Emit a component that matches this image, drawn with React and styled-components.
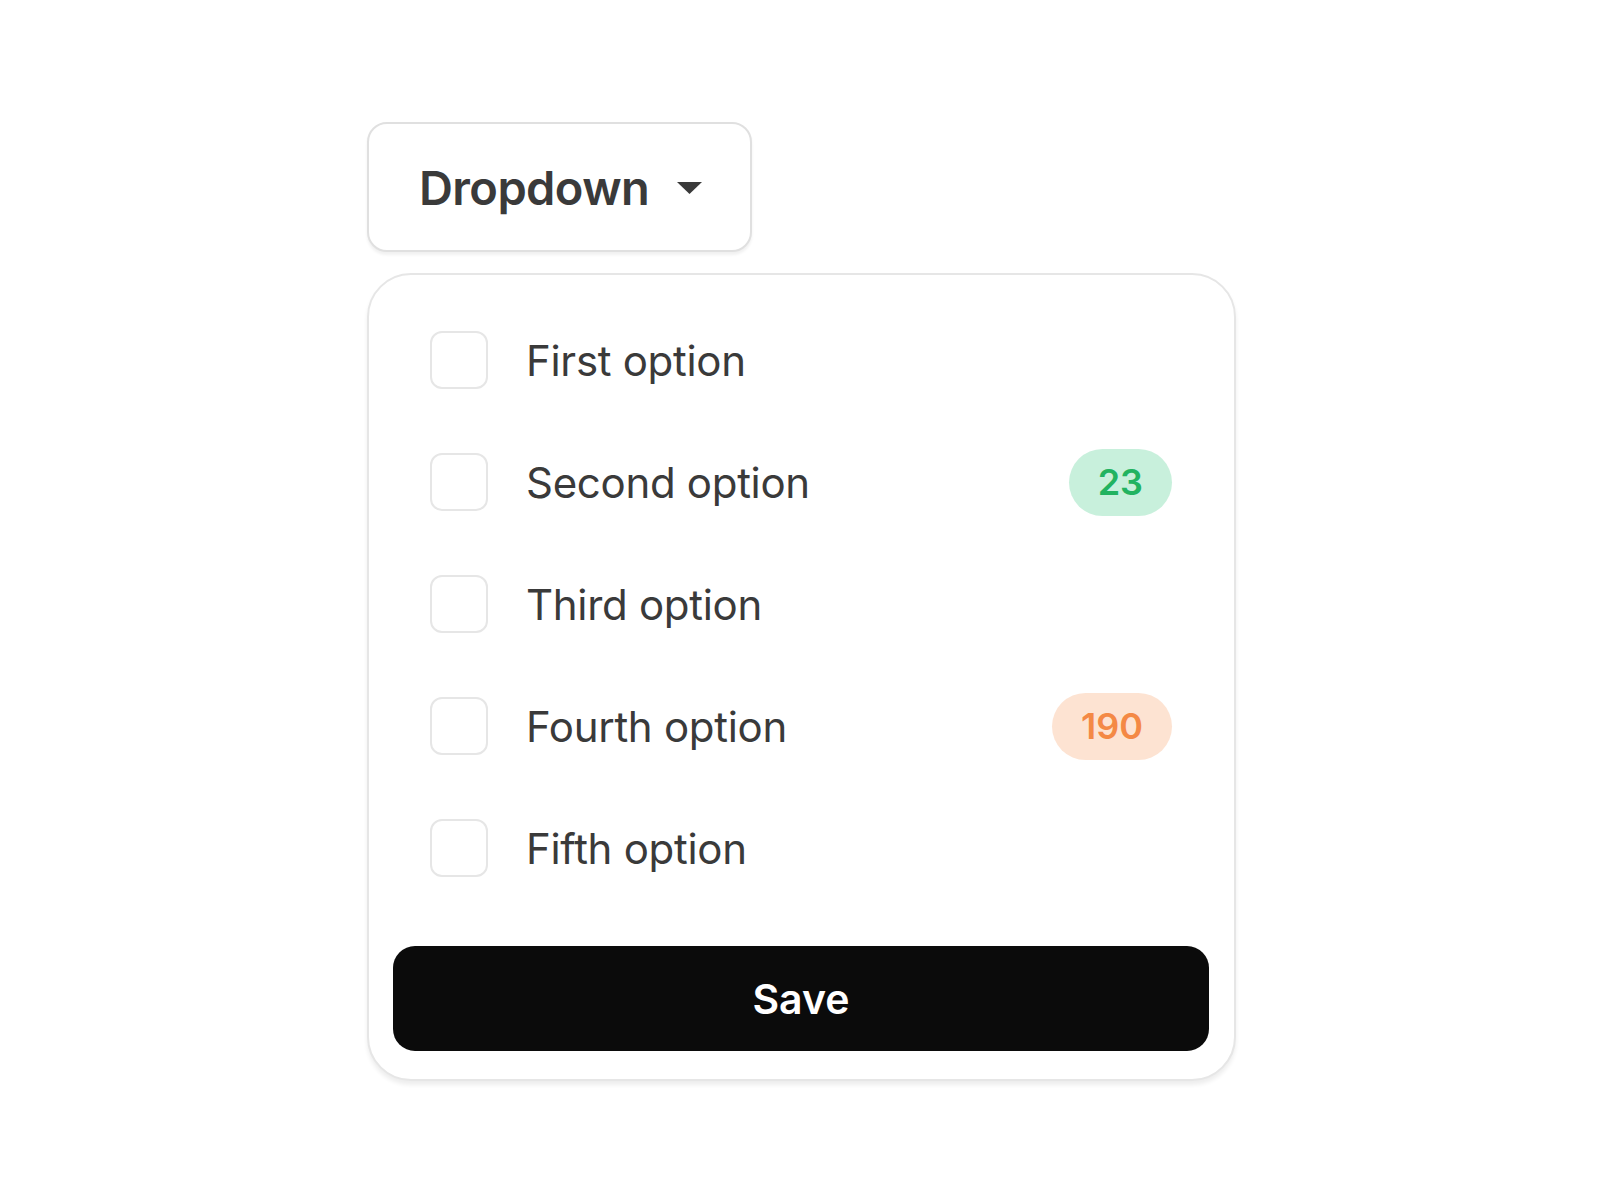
import React, { useState } from "react";
import styled, { createGlobalStyle } from "styled-components";

const GlobalStyle = createGlobalStyle`
  body {
    margin: 0;
    background: #fff;
    font-family: Inter, "Noto Sans", sans-serif;
    color: #3a3a3a;
  }
`;

const OPTIONS = [
  { label: "First option" },
  { label: "Second option", count: 23, tone: "green" },
  { label: "Third option" },
  { label: "Fourth option", count: 190, tone: "orange" },
  { label: "Fifth option" },
];

const TONES = {
  green: { bg: "#c8f0dc", fg: "#22b360" },
  orange: { bg: "#fde3d2", fg: "#f48945" },
};

function App() {
  const [checked, setChecked] = useState({});

  const toggle = (label) =>
    setChecked((prev) => ({ ...prev, [label]: !prev[label] }));

  return (
    <StyledPage>
      <GlobalStyle />
      <DropdownButton type="button">
        Dropdown
        <svg width="27" height="14" viewBox="0 0 27 14">
          <path d="M1 1 L26 1 L13.5 13 Z" fill="#3a3a3a" />
        </svg>
      </DropdownButton>

      <Panel>
        {OPTIONS.map((opt) => (
          <OptionRow key={opt.label} onClick={() => toggle(opt.label)}>
            <Checkbox $checked={!!checked[opt.label]} />
            <OptionLabel>{opt.label}</OptionLabel>
            {opt.count !== undefined && (
              <Badge $tone={opt.tone}>{opt.count}</Badge>
            )}
          </OptionRow>
        ))}
        <SaveButton type="button">Save</SaveButton>
      </Panel>
    </StyledPage>
  );
}

export default App;

const StyledPage = styled.div`
  display: flex;
  flex-direction: column;
  align-items: flex-start;
  gap: 21px;
  padding: 122px 0 0 367px;
  min-height: 100vh;
  box-sizing: border-box;
`;

const DropdownButton = styled.button`
  display: flex;
  align-items: center;
  gap: 27px;
  box-sizing: border-box;
  width: 385px;
  height: 130px;
  padding: 0 0 0 50px;
  background: #fff;
  border: 2px solid #e0e0e0;
  border-radius: 20px;
  box-shadow: 0 3px 3px rgba(0, 0, 0, 0.06);
  font-family: Inter, "Noto Sans", sans-serif;
  font-size: 47px;
  font-weight: 600;
  color: #3a3a3a;
  letter-spacing: -0.6px;
  white-space: nowrap;
  cursor: pointer;

  svg {
    flex: none;
    margin-top: 2px;
  }
`;

const Panel = styled.div`
  box-sizing: border-box;
  width: 869px;
  padding: 24px 25px 28px 24px;
  background: #fff;
  border: 2px solid #e6e6e6;
  border-radius: 44px;
  box-shadow: 0 4px 4px rgba(0, 0, 0, 0.07);
  display: flex;
  flex-direction: column;
`;

const OptionRow = styled.div`
  display: flex;
  align-items: center;
  height: 122px;
  padding: 0 37px;
  cursor: pointer;
`;

const Checkbox = styled.span`
  flex: none;
  box-sizing: border-box;
  width: 58px;
  height: 58px;
  border: 2px solid #e6e6e6;
  border-radius: 12px;
  background: ${(p) => (p.$checked ? "#0b0b0b" : "#fff")};
`;

const OptionLabel = styled.span`
  flex: 1;
  margin-left: 38px;
  font-size: 42px;
  font-weight: 400;
  letter-spacing: -0.3px;
  color: #3a3a3a;
`;

const Badge = styled.span`
  display: inline-flex;
  align-items: center;
  justify-content: center;
  height: 67px;
  padding: 0 29px;
  border-radius: 34px;
  background: ${(p) => TONES[p.$tone].bg};
  color: ${(p) => TONES[p.$tone].fg};
  font-size: 36px;
  font-weight: 600;
`;

const SaveButton = styled.button`
  margin-top: 37px;
  height: 105px;
  border: none;
  border-radius: 22px;
  background: #0b0b0b;
  color: #fff;
  font-family: Inter, "Noto Sans", sans-serif;
  font-size: 41px;
  font-weight: 600;
  cursor: pointer;
`;
